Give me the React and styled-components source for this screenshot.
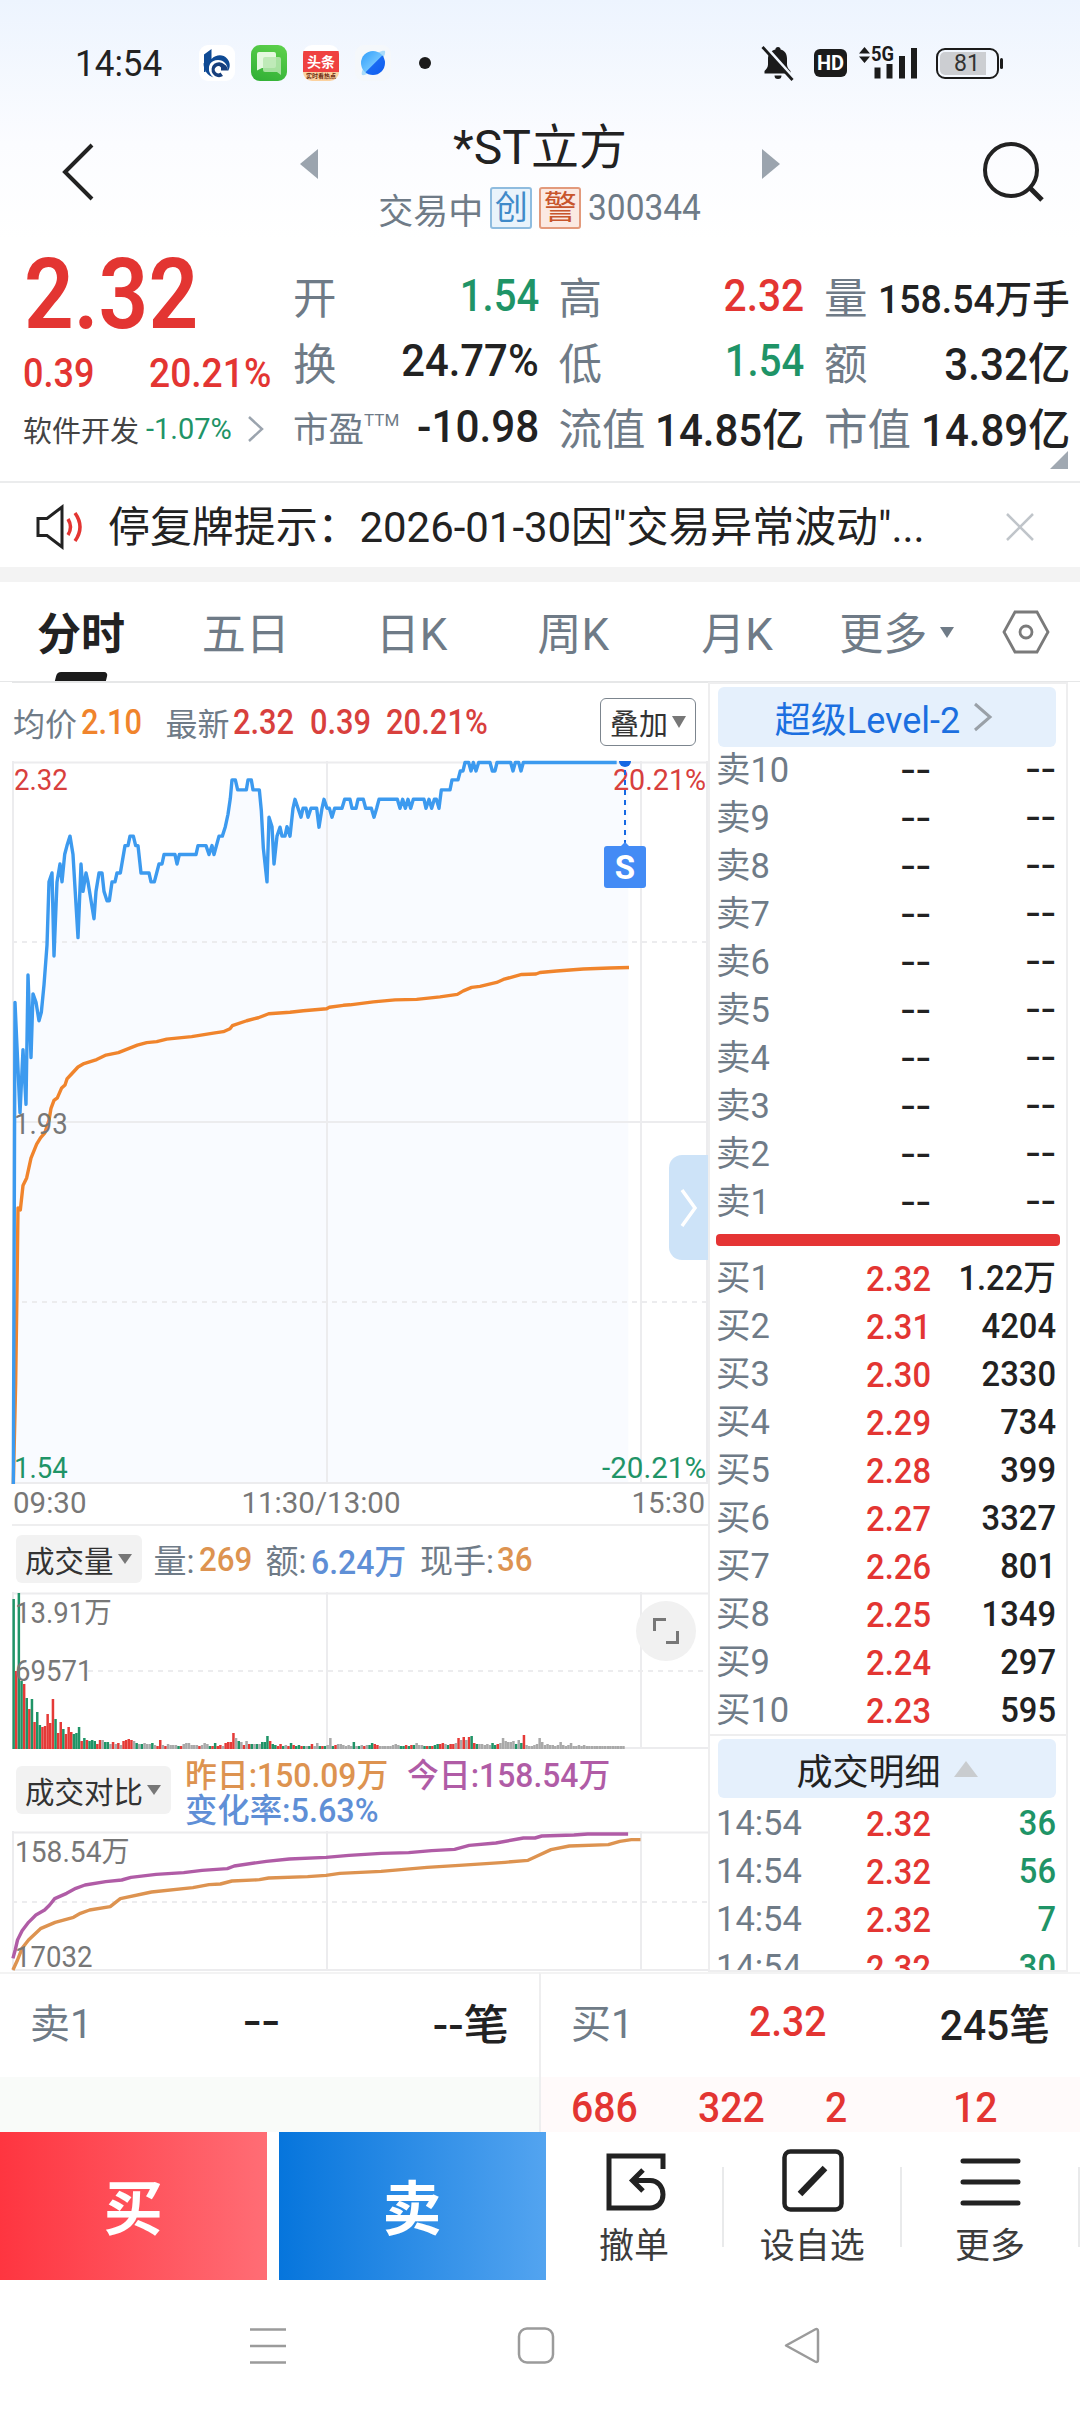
import React from "react";
import styled, { createGlobalStyle } from "styled-components";

const C = {
  ink: "#222222",
  label: "#6f7b87",
  red: "#e33532",
  green: "#1f9467",
  blue: "#3c9aef",
  orange: "#f0842c",
  axis: "#777777",
  line: "#eeeeef",
  sand: "#dd9350",
  steel: "#5f8fd6",
  purple: "#b05ca6",
};

const Global = createGlobalStyle`
  html, body { margin: 0; padding: 0; background: #fff; }
  body { font-family: Roboto, "Noto Sans CJK SC", sans-serif; color: ${C.ink}; }
  *, *::before, *::after { box-sizing: border-box; }
  svg { display: block; flex: none; overflow: visible; }
`;

const Screen = styled.div`
  width: 1080px;
  height: 2412px;
  overflow: hidden;
  display: flex;
  flex-direction: column;
  background: #fff;
`;

/* $sx condenses the glyphs; $from is the edge that stays in place */
const Text = styled.span`
  display: inline-block;
  font-size: ${(p) => p.$size || 34}px;
  font-weight: ${(p) => p.$weight || 400};
  color: ${(p) => p.$color || C.ink};
  margin-left: ${(p) => p.$ml || 0}px;
  margin-right: ${(p) => p.$mr || 0}px;
  margin-bottom: ${(p) => p.$up || 0}px;
  white-space: nowrap;
  transform: scaleX(${(p) => p.$sx || 1});
  transform-origin: ${(p) => p.$from || "left"} center;
`;

/* ---------- top ---------- */
const Top = styled.header`
  height: 240px;
  flex: none;
  background: linear-gradient(#edf4fe, #fbfcff 60%, #fff);
`;
const StatusBar = styled.div`
  height: 104px;
  padding: 22px 81px 0 75px;
  display: flex;
  align-items: center;
`;
const AppIcons = styled.div`
  display: flex;
  align-items: center;
  gap: 16px;
  margin-left: 34px;
`;
const AppIcon = styled.div`
  width: 36px;
  height: 36px;
  border-radius: 9px;
  overflow: hidden;
  background: ${(p) => p.$bg || "#fff"};
`;
const NewsIcon = styled(AppIcon)`
  display: flex;
  flex-direction: column;
  justify-content: flex-end;
  text-align: center;
  white-space: nowrap;
  background: linear-gradient(#fff 18%, #ef4140 18%, #ef4140 74%, #fbd2a0 74%);
  color: #fff;
  font-size: 14px;
  font-weight: 700;
  line-height: 18px;
  small {
    color: #6b2b10;
    font-size: 6px;
    line-height: 10px;
  }
`;
const Dot = styled.i`
  width: 12px;
  height: 12px;
  margin-left: 28px;
  border-radius: 50%;
  background: #1b1b1b;
`;
const StatusRight = styled.div`
  margin-left: auto;
  display: flex;
  align-items: center;
`;
const HdBadge = styled.div`
  width: 33px;
  height: 28px;
  margin: 0 10px 0 19px;
  border-radius: 6px;
  background: #1b1b1b;
  color: #fff;
  font-size: 20px;
  font-weight: 700;
  line-height: 29px;
  text-align: center;
`;
const Battery = styled.div`
  width: 63px;
  height: 31px;
  margin-left: 17px;
  padding: 2px;
  border: 2px solid #1b1b1b;
  border-radius: 9px;
  position: relative;
  div {
    width: 46px;
    height: 23px;
    border-radius: 5px 0 0 5px;
    background: #ccced2;
    padding-left: 14px;
    font-size: 23px;
    line-height: 24px;
    color: #333;
  }
  &::after {
    content: "";
    position: absolute;
    right: -6px;
    top: 8px;
    width: 3px;
    height: 11px;
    border-radius: 2px;
    background: #1b1b1b;
  }
`;
const TitleBar = styled.div`
  height: 136px;
  display: grid;
  grid-template-columns: 300px 480px 300px;
`;
const Side = styled.div`
  display: flex;
  justify-content: ${(p) => p.$end || "flex-start"};
  padding: ${(p) => p.$pad};
`;
const TitleGroup = styled.div`
  display: flex;
  justify-content: space-between;
  & > svg {
    margin-top: 45px;
  }
`;
const TitleBlock = styled.div`
  display: flex;
  flex-direction: column;
  align-items: center;
  padding-top: 10px;
`;
const Name = styled.h1`
  margin: 0;
  font-size: 48px;
  font-weight: 400;
  line-height: 68px;
`;
const SubLine = styled.div`
  display: flex;
  align-items: center;
  height: 52px;
`;
const Tag = styled.span`
  width: 42px;
  height: 42px;
  margin-left: 7px;
  border: 2px solid ${(p) => p.$edge};
  border-radius: 3px;
  background: ${(p) => p.$bg};
  color: ${(p) => p.$fg};
  font-size: 33px;
  line-height: 37px;
  text-align: center;
`;

/* ---------- quote ---------- */
const Quote = styled.section`
  height: 243px;
  flex: none;
  position: relative;
  display: grid;
  grid-template-columns: 293px 777px;
  border-bottom: 2px solid #ebeced;
`;
const PriceCol = styled.div`
  padding: 9px 0 0 23px;
  display: flex;
  flex-direction: column;
`;
const PriceRow = styled.div`
  height: ${(p) => p.$h}px;
  display: flex;
  align-items: center;
  & > svg {
    margin-left: 15px;
  }
`;
const Stats = styled.div`
  display: grid;
  grid-template-columns: repeat(3, 246px);
  grid-auto-rows: 65.6px;
  column-gap: 19.5px;
  padding-top: 23px;
`;
const Stat = styled.div`
  display: flex;
  align-items: center;
  justify-content: space-between;
`;
const Sup = styled.sup`
  font-size: 17px;
  line-height: 0;
  vertical-align: 16px;
`;
const Corner = styled.i`
  position: absolute;
  right: 12px;
  bottom: 12px;
  border-left: 18px solid transparent;
  border-bottom: 18px solid #a0a8b1;
`;

/* ---------- notice + tabs ---------- */
const Notice = styled.section`
  height: 84px;
  flex: none;
  display: flex;
  align-items: center;
  padding: 4px 46px 0 36px;
  & > :last-child {
    margin-left: auto;
  }
`;
const Band = styled.div`
  height: 15px;
  flex: none;
  background: #f3f3f3;
`;
const Tabs = styled.nav`
  height: 100px;
  flex: none;
  display: flex;
  align-items: center;
  padding: 0 30px 0 37px;
  border-bottom: 1px solid #e6e7e8;
`;
const Tab = styled.div`
  width: ${(p) => p.$w}px;
  height: 99px;
  padding-top: 6px;
  display: flex;
  align-items: center;
  font-size: 44px;
  line-height: 60px;
  font-weight: ${(p) => (p.$on ? 700 : 400)};
  color: ${(p) => (p.$on ? C.ink : C.label)};
  position: relative;
  ${(p) =>
    p.$on &&
    `&::after {
      content: "";
      position: absolute;
      left: 19px;
      bottom: 0;
      width: 51px;
      height: 9px;
      border-radius: 4px 4px 0 0;
      transform: skewX(-14deg);
      background: #1b1b1b;
    }`}
`;
const Caret = styled.i`
  display: inline-block;
  border: ${(p) => p.$s || 7.5}px solid transparent;
  border-top: ${(p) => p.$h || 11}px solid ${(p) => p.$c || "#6f7b87"};
  border-bottom: 0;
  margin-left: ${(p) => p.$ml || 0}px;
  margin-bottom: ${(p) => p.$up || 0}px;
`;

/* ---------- body ---------- */
const Body = styled.main`
  height: 1290px;
  flex: none;
  display: flex;
  padding-left: 12px;
`;
const ChartCol = styled.div`
  width: 696px;
  display: flex;
  flex-direction: column;
`;
const Legend = styled.div`
  height: 79px;
  padding: 0 12px 0 1px;
  border-top: 1px solid #e6e7e8;
  display: flex;
  align-items: center;
`;
const OverlayButton = styled.div`
  width: 96px;
  height: 48px;
  margin-left: auto;
  display: flex;
  align-items: center;
  justify-content: center;
  gap: 4px;
  border: 1.5px solid #7c858e;
  border-radius: 6px;
  font-size: 29px;
  color: #333;
`;
const Plot = styled.div`
  height: ${(p) => p.$h}px;
  position: relative;
`;
const AxisText = styled.span`
  position: absolute;
  ${(p) => (p.$right !== undefined ? `right: ${p.$right}px;` : `left: ${p.$left || 2}px;`)}
  top: ${(p) => p.$y - 20}px;
  font-size: 29px;
  line-height: 40px;
  color: ${(p) => p.$color || C.axis};
  transform: scaleX(${(p) => p.$sx || 0.95});
  transform-origin: ${(p) => (p.$right !== undefined ? "right" : "left")} center;
`;
const Marker = styled.div`
  position: absolute;
  left: 592px;
  top: 85px;
  width: 42px;
  height: 42px;
  border-radius: 3px;
  background: #438bf5;
  color: #fff;
  font-size: 33px;
  font-weight: 700;
  line-height: 43px;
  text-align: center;
`;
const MarkerLine = styled.svg`
  position: absolute;
  left: 607px;
  top: 0;
`;
const Drawer = styled.div`
  position: absolute;
  right: 0;
  top: 394px;
  width: 39px;
  height: 105px;
  border-radius: 13px 0 0 13px;
  background: #cde3f8;
  display: flex;
  align-items: center;
  padding-left: 10px;
`;
const TimeAxis = styled.div`
  height: 42px;
  display: grid;
  grid-template-columns: 1fr auto 1fr;
  align-items: center;
  padding: 0 3px 3px 1px;
  border-bottom: 2px solid ${C.line};
  color: ${C.axis};
  font-size: 29.5px;
  span:nth-child(2) { margin-right: 76px; }
  span:last-child { text-align: right; }
`;
const IndicatorHead = styled.div`
  height: ${(p) => p.$h}px;
  display: flex;
  align-items: center;
  padding-left: 4px;
`;
const Picker = styled.div`
  height: 48px;
  padding: 0 10px 0 9px;
  display: flex;
  align-items: center;
  gap: 4px;
  flex: none;
  border-radius: 6px;
  background: #f2f2f2;
  color: #333;
  font-size: 29.5px;
`;
const Compare = styled.div`
  margin: 1px 0 0 14px;
`;
const CompareRow = styled.div`
  height: 35px;
  display: flex;
  align-items: center;
`;
const Expand = styled.div`
  position: absolute;
  left: 624px;
  top: 9px;
  width: 60px;
  height: 60px;
  border-radius: 50%;
  background: #f1f1f1;
  display: flex;
  align-items: center;
  justify-content: center;
`;

const Book = styled.aside`
  width: 360px;
  border: 2.5px solid #eeeeef;
  border-bottom-width: 2px;
  display: flex;
  flex-direction: column;
  overflow: hidden;
`;
const BookButton = styled.div`
  width: 338px;
  height: ${(p) => p.$h}px;
  margin: ${(p) => p.$m};
  padding-right: ${(p) => p.$pr || 0}px;
  flex: none;
  display: flex;
  align-items: center;
  justify-content: center;
  gap: 13px;
  border-radius: 6px;
  background: #e5f0fc;
  color: ${(p) => p.$c};
  font-size: 36px;
`;
const Level = styled.div`
  height: 48px;
  flex: none;
  display: grid;
  grid-template-columns: 84px 131px 125px;
  align-items: center;
  padding-left: 6px;
  font-size: 35px;
  line-height: 48px;
  span {
    text-align: right;
    white-space: nowrap;
    transform: scaleX(${(p) => (p.$empty ? 1.28 : 0.935)});
    transform-origin: right center;
  }
  span:first-child {
    text-align: left;
    color: ${C.label};
    transform: scaleX(0.985);
    transform-origin: left center;
  }
  span:nth-child(2) { color: ${(p) => (p.$empty ? C.ink : C.red)}; font-weight: 500; padding-top: ${(p) => (p.$empty ? 0 : 2)}px; }
  span:last-child { color: ${(p) => p.$qty || C.ink}; font-weight: 500; margin-top: ${(p) => (p.$empty ? -3 : 0)}px; }
`;
const RedBar = styled.div`
  width: 344px;
  height: 12px;
  margin: 7px 0 8px 6px;
  flex: none;
  border-radius: 4px;
  background: #e53434;
`;
const Rule = styled.div`
  height: 2px;
  flex: none;
  background: #eeeeef;
`;

/* ---------- queue ---------- */
const Queue = styled.section`
  height: 160px;
  flex: none;
  display: grid;
  grid-template-columns: 539px 541px;
`;
const QueueSide = styled.div`
  border-top: 2px solid #f3f3f3;
  border-left: ${(p) => (p.$buy ? "2px solid #eeeeef" : "0")};
  display: flex;
  flex-direction: column;
`;
const QueueHead = styled.div`
  height: 103px;
  display: grid;
  grid-template-columns: ${(p) => p.$cols};
  align-items: center;
  padding: 0 0 9px 30px;
  span:last-child { text-align: right; }
`;
const QueueRow = styled.div`
  height: 55px;
  padding: 5px 0 0 30px;
  background: ${(p) => p.$bg};
  display: grid;
  grid-template-columns: 127px 127px 128px 1fr;
  align-items: center;
`;

/* ---------- actions ---------- */
const Actions = styled.footer`
  height: 148px;
  flex: none;
  display: flex;
`;
const Trade = styled.button`
  width: 267px;
  margin: 0 12px 0 0;
  padding: 0 0 4px;
  border: 0;
  background: linear-gradient(90deg, ${(p) => p.$from}, ${(p) => p.$to});
  color: #fff;
  font: 700 59px Roboto, "Noto Sans CJK SC", sans-serif;
  &:nth-child(2) { margin-right: 0; }
`;
const Action = styled.div`
  width: ${(p) => p.$w}px;
  display: flex;
  flex-direction: column;
  align-items: center;
  padding-top: 14px;
  font-size: 35px;
  line-height: 50px;
  color: #3c3c3c;
  svg { margin-bottom: 12px; }
`;
const Split = styled.i`
  width: 2px;
  height: 80px;
  margin-top: 35px;
  background: #e9eaeb;
`;
const NavBar = styled.div`
  flex: 1;
  display: flex;
  align-items: flex-start;
  padding: 47px 0 0 249px;
`;

/* ---------- data ---------- */
const PRICE =
  "40,1493 45,525 50,600 60,747 69,620 78,730 84,470 93,636 99,508 108,525 117,562 124,545 132,490 141,410 147,283 156,265 162,432 171,283 180,247 186,283 194,228 201,210 210,191 219,228 234,395 243,247 249,302 258,265 264,283 282,357 288,302 297,265 306,265 312,302 321,321 328,321 336,283 345,283 351,265 361,265 375,210 384,210 390,191 400,191 407,210 414,210 423,265 447,265 453,283 463,283 477,247 486,247 492,228 525,228 531,247 538,228 588,228 594,210 618,210 627,228 636,210 642,228 657,191 667,191 676,172 684,147 691,115 696,78 706,78 713,98 739,98 744,78 754,78 759,98 778,98 784,140 790,215 801,283 807,153 816,172 822,247 831,191 840,173 846,191 855,191 861,172 870,191 879,135 885,117 903,153 909,135 918,135 924,153 933,135 950,135 957,173 966,135 972,117 981,135 988,135 996,153 1004,135 1026,135 1034,117 1050,117 1056,135 1068,135 1074,117 1090,117 1097,135 1114,135 1122,153 1130,135 1137,117 1192,117 1200,135 1208,117 1216,135 1224,117 1232,135 1240,117 1272,117 1278,135 1287,117 1295,135 1303,117 1309,117 1317,135 1324,98 1350,98 1356,78 1374,78 1381,60 1389,60 1395,43 1406,43 1413,60 1420,43 1428,60 1436,43 1470,43 1477,60 1485,60 1491,43 1532,43 1539,60 1546,43 1556,43 1563,60 1570,43 1850,43";
const AVERAGE =
  "40,1493 47,1290 51,1100 54,938 61,942 69,893 80,878 93,838 110,810 122,797 134,788 147,762 153,738 162,722 172,717 185,697 195,691 201,679 216,668 234,655 252,648 290,640 318,631 355,626 412,611 440,606 470,604 500,599 575,594 640,587 670,584 690,578 697,572 740,562 775,556 806,548 870,545 910,542 980,538 988,535 1030,531 1050,530 1085,527 1120,524 1185,520 1250,519 1320,514 1372,509 1390,502 1415,495 1440,493 1490,485 1510,479 1565,469 1608,468 1620,465 1670,462 1750,458 1830,456 1887,455";
const TODAY =
  "28,655 33,630 38,600 48,572 62,547 78,525 97,510 108,495 119,476 145,460 165,445 185,435 230,425 265,420 285,412 340,403 400,398 440,391 495,386 510,378 580,364 630,357 710,352 760,346 830,340 890,338 940,332 990,328 1022,316 1080,309 1140,294 1165,294 1180,288 1250,285 1280,282 1368,282";
const YESTERDAY =
  "28,690 38,660 48,625 62,600 88,566 120,547 160,532 175,520 195,510 240,500 262,476 330,456 420,443 455,434 480,432 505,423 565,419 585,414 670,410 710,406 740,400 830,394 930,382 1000,376 1100,367 1150,361 1170,348 1200,329 1240,318 1325,314 1350,304 1375,299 1395,299";
/* one entry a minute: r = up, g = down, a = flat, then the bar height */
const VOLUME = (
  "g150 r78 g156 g68 r65 g51 r40 g50 r27 g37 g24 r22 r23 r35 r26 r50 g30 r16 r27 g20 r15 r22 r17 g15 g16 g22 r8 g11 r9 g8 g9 g8 r5 r9 a9 g7 g7 a5 r7 a5 r6 a4 r8 r9 r10 r9 a8 g6 a5 g5 a6 a5 a5 g6 a4 r3 r9 a4 r3 a5 a4 a4 a4 g3 r3 a5 a6 a6 a4 a4 a4 r3 a4 a6 a5 g3 r3 g6 r3 r4 a3 r6 r7 r7 r16 a11 g8 a7 r4 a8 r5 g5 a5 g5 a5 g7 g7 g13 r8 g5 g4 r3 r5 g3 a4 r3 g6 r4 g3 g4 r3 g3 a3 g3 r5 a3 a6 g3 r3 g3 a4 a11 " +
  "g3 r4 a5 a5 a4 a3 a4 a3 g7 a3 g3 a4 r3 a4 g4 g6 r5 r4 a3 a3 a3 a3 a3 a4 a5 a4 g3 g3 r4 g3 r4 g4 a6 a4 a4 g3 r3 g3 r3 g4 g5 r5 r6 a5 g4 r5 r5 a6 r11 a9 r12 a9 r12 g13 r6 g5 a5 a5 a4 a5 a4 g6 g4 r5 a6 a11 a8 a7 a7 a8 g5 a9 g6 r14 a4 a3 a3 a4 a5 a11 a7 a4 a5 a4 a4 a3 a4 a7 a4 a3 a4 a6 a3 a3 a4 a3 a4 a3 a3 a3 a3 a3 a3 a3 a3 a3 a3 a3 a3 a3 a3 a3"
).split(" ");
const BAR_COLOR = { r: "#e53a37", g: "#1f9467", a: "#a9a9a9" };

const BUYS = [
  ["2.32", "1.22万"],
  ["2.31", "4204"],
  ["2.30", "2330"],
  ["2.29", "734"],
  ["2.28", "399"],
  ["2.27", "3327"],
  ["2.26", "801"],
  ["2.25", "1349"],
  ["2.24", "297"],
  ["2.23", "595"],
];
const STATS = [
  { k: "开", v: "1.54", color: C.green, sx: 0.91 },
  { k: "高", v: "2.32", color: C.red, sx: 0.925 },
  { k: "量", v: "158.54万手", size: 39, sx: 0.96 },
  { k: "换", v: "24.77%", sx: 0.95 },
  { k: "低", v: "1.54", color: C.green, sx: 0.91 },
  { k: "额", v: "3.32亿", sx: 0.96 },
  { k: "市盈", v: "-10.98", sx: 0.96 },
  { k: "流值", v: "14.85亿", sx: 0.955 },
  { k: "市值", v: "14.89亿", sx: 0.955 },
];

function Grid({ h, mid, quarters, dashFrom = 0 }) {
  return (
    <g fill="none" stroke="#ececee" strokeWidth="2">
      <path d={`M0 1.5H696M0 ${h - 1}H696M1 0V${h}M315 0V${h}M629 0V${h}`} />
      {quarters && <path d={`M0 ${mid}H696M695 0V${h}`} />}
      {(quarters || [mid]).map((y) => (
        <path key={y} d={`M${dashFrom} ${y}H696`} strokeDasharray="5 5" />
      ))}
    </g>
  );
}

function Lines({ h, viewBox, children }) {
  return (
    <svg x="0" y="0" width="696" height={h} viewBox={viewBox} preserveAspectRatio="none">
      {children}
    </svg>
  );
}

function Trend({ points, color }) {
  return (
    <polyline
      points={points}
      fill="none"
      stroke={color}
      strokeWidth="3.400"
      vectorEffect="non-scaling-stroke"
      strokeLinejoin="round"
    />
  );
}

function StatusIcons() {
  return (
    <StatusRight>
      <svg width="34" height="36" viewBox="0 0 34 36">
        <path d="M17 2c1.6 0 2.6 1 2.6 2.4C24 5.600 26 9 26 13.500v6c0 2.500 1.500 4.500 3.500 6.500v2.500h-26V26c2-2 3.500-4 3.500-6.500v-6C7 9 10 5.600 14.400 4.400 14.400 3 15.400 2 17 2zM13.500 30.500h7a3.500 3.500 0 0 1-7 0z" fill="#1b1b1b" />
        <path d="M4 1.500 33 34" stroke="#f3f8ff" strokeWidth="4" />
        <path d="M1.500 2 31.500 35" stroke="#1b1b1b" strokeWidth="2.800" />
      </svg>
      <HdBadge>HD</HdBadge>
      <svg width="62" height="34" viewBox="0 0 62 34">
        <path d="M2 7.500 7.500 1 13 7.500zM2 10.500 7.500 17 13 10.500z" fill="#1b1b1b" />
        <text x="14" y="15" fontSize="19.500" fontWeight="700" fill="#1b1b1b" textLength="23" lengthAdjust="spacingAndGlyphs">5G</text>
        <path d="M20.500 21.500v11M32.500 18v14.500M45 10v22.500M57 2v30.500" stroke="#1b1b1b" strokeWidth="6" />
      </svg>
      <Battery>
        <div>81</div>
      </Battery>
    </StatusRight>
  );
}

function Header() {
  return (
    <Top>
      <StatusBar>
        <Text $size={36.5} $sx={0.96} $mr={-1}>14:54</Text>
        <AppIcons>
          <AppIcon>
            <svg width="36" height="36" viewBox="0 0 36 36">
              <path d="M5 9.500 12.500 4V14C17 9.500 24 9 28 13.500 31.500 17.500 31.500 22 29 26 28.500 19 25 15 19 15 12 15 9 20 10 26L6.500 22.500V27H5z" fill="#0f4a94" />
              <path d="M25.500 19.500A7.500 7.500 0 1 0 24 31l-2.500-3.500a3.500 3.500 0 1 1 .5-5v3h7c0-2.500-1.500-5-3.500-6z" fill="#173f7c" />
              <path d="M4.500 18c0 7 4 12.500 10 14.500-4-3.500-5-7-4.500-10.500z" fill="#0f4a94" />
            </svg>
          </AppIcon>
          <AppIcon $bg="linear-gradient(200deg, #5fd24c, #2fae35)">
            <svg width="36" height="36" viewBox="0 0 36 36">
              <path d="M8 7h15q2 0 2 2v12q0 2-2 2H11l-5 2.500V9q0-2 2-2z" fill="#e4f8df" />
              <path d="M14 12h14q2 0 2 2v16l-4-3H14q-2 0-2-2V14q0-2 2-2z" fill="#b9e8b2" opacity=".85" />
            </svg>
          </AppIcon>
          <NewsIcon>
            头条
            <small>实时看热点</small>
          </NewsIcon>
          <AppIcon $bg="#f5f8fb">
            <svg width="36" height="36" viewBox="0 0 36 36">
              <defs>
                <linearGradient id="planet" x1="0" y1="0" x2="1" y2="1">
                  <stop offset="0" stopColor="#2f9dfb" />
                  <stop offset=".52" stopColor="#6cc2ff" />
                  <stop offset=".55" stopColor="#1a6af2" />
                  <stop offset="1" stopColor="#0f5df0" />
                </linearGradient>
              </defs>
              <path d="M30 6c-2-1-8 1-13 6S5 26 7 30c3 1 9-3 14-8s10-12 9-16z" fill="#a9dcfb" />
              <circle cx="18" cy="18" r="12" fill="url(#planet)" />
            </svg>
          </AppIcon>
        </AppIcons>
        <Dot />
        <StatusIcons />
      </StatusBar>
      <TitleBar>
        <Side $pad="38px 0 0 60px">
          <svg width="36" height="60" viewBox="0 0 36 60">
            <path d="M32 3 5 30l27 27" fill="none" stroke={C.ink} strokeWidth="4" />
          </svg>
        </Side>
        <TitleGroup>
          <svg width="18" height="30"><path d="M18 0v30L0 15z" fill="#9ba4ae" /></svg>
          <TitleBlock>
            <Name>*ST立方</Name>
            <SubLine>
              <Text $size={35} $color={C.label}>交易中</Text>
              <Tag $edge="#8fbcdf" $bg="#e9f3fb" $fg="#3f8ac9">创</Tag>
              <Tag $edge="#e39a7c" $bg="#fbe9e2" $fg="#c8552c">警</Tag>
              <Text $size={36} $color={C.label} $ml={7} $mr={-8} $sx={0.93}>300344</Text>
            </SubLine>
          </TitleBlock>
          <svg width="18" height="30"><path d="M0 0v30l18-15z" fill="#9ba4ae" /></svg>
        </TitleGroup>
        <Side $end="flex-end" $pad="37px 34px 0 0">
          <svg width="64" height="62" viewBox="0 0 64 62">
            <circle cx="29" cy="29" r="26" fill="none" stroke={C.ink} strokeWidth="4" />
            <path d="M48 47 60 59" stroke={C.ink} strokeWidth="5" />
          </svg>
        </Side>
      </TitleBar>
    </Top>
  );
}

function QuotePanel() {
  return (
    <Quote>
      <PriceCol>
        <PriceRow $h={90}>
          <Text $size={98} $weight={600} $color={C.red} $sx={0.89} $ml={1}>2.32</Text>
        </PriceRow>
        <PriceRow $h={68}>
          <Text $size={40} $weight={500} $color={C.red} $sx={0.9}>0.39</Text>
          <Text $size={40} $weight={500} $color={C.red} $ml={47} $sx={0.93}>20.21%</Text>
        </PriceRow>
        <PriceRow $h={44}>
          <Text $size={29} $color="#444">软件开发</Text>
          <Text $size={29} $color={C.green} $ml={7}>-1.07%</Text>
          <svg width="18" height="26"><path d="M2 1 15 13 2 25" fill="none" stroke="#9ba4ae" strokeWidth="2.500" /></svg>
        </PriceRow>
      </PriceCol>
      <Stats>
        {STATS.map(({ k, v, color, size, sx }) => (
          <Stat key={k}>
            <Text $size={k === "市盈" ? 35.5 : 43.5} $color={C.label}>
              {k}
              {k === "市盈" && <Sup>TTM</Sup>}
            </Text>
            <Text $size={size || 44} $weight={500} $color={color} $sx={sx} $from="right">{v}</Text>
          </Stat>
        ))}
      </Stats>
      <Corner />
    </Quote>
  );
}

function PriceChart() {
  return (
    <Plot $h={723}>
      <svg width="696" height="723">
        <Lines h={723} viewBox="36 42 2088 1453">
          <polygon points={`${PRICE} 1885,43 1885,1493`} fill="#f9fbff" />
        </Lines>
        <Grid h={723} mid={361} quarters={[181, 541]} />
        <Lines h={723} viewBox="36 40 2088 1453">
          <Trend points={AVERAGE} color={C.orange} />
          <Trend points={PRICE} color={C.blue} />
        </Lines>
      </svg>
      <AxisText $y={19} $color="#d8403d">2.32</AxisText>
      <AxisText $y={19} $right={2} $sx={0.99} $color="#d8403d">20.21%</AxisText>
      <AxisText $y={363}>1.93</AxisText>
      <AxisText $y={707} $color={C.green}>1.54</AxisText>
      <AxisText $y={707} $right={2} $sx={1.02} $color={C.green}>-20.21%</AxisText>
      <MarkerLine width="12" height="88">
        <path d="M0 0h12a6 6 0 0 1-12 0z" fill="#1668e3" />
        <path d="M6 9V82" stroke="#1668e3" strokeWidth="2" strokeDasharray="5 5" />
        <path d="M1 86 6 81l5 5z" fill="#438bf5" />
      </MarkerLine>
      <Marker>S</Marker>
      <Drawer>
        <svg width="20" height="38"><path d="M3 1 16 19 3 37" fill="none" stroke="#fff" strokeWidth="3.500" /></svg>
      </Drawer>
    </Plot>
  );
}

function VolumeChart() {
  return (
    <Plot $h={157}>
      <svg width="696" height="157">
        <Grid h={157} mid={79} dashFrom={76} />
        {VOLUME.map((v, i) => {
          const h = Number(v.slice(1));
          return <rect key={i} x={(0.4 + i * 2.617).toFixed(1)} y={157 - h} width="2.500" height={h} fill={BAR_COLOR[v[0]]} />;
        })}
      </svg>
      <AxisText $y={21} $left={3}>13.91万</AxisText>
      <AxisText $y={79} $left={3}>69571</AxisText>
      <Expand>
        <svg width="26" height="26"><path d="M1.500 13V1.500H13M13 24.500h11.500V13" fill="none" stroke="#777" strokeWidth="3" /></svg>
      </Expand>
    </Plot>
  );
}

function CompareChart() {
  return (
    <Plot $h={140}>
      <svg width="696" height="140">
        <Grid h={140} mid={71} />
        <Lines h={140} viewBox="26 273 1516 420">
          <Trend points={YESTERDAY} color={C.sand} />
          <Trend points={TODAY} color={C.purple} />
        </Lines>
      </svg>
      <AxisText $y={21} $left={3} $sx={0.97}>158.54万</AxisText>
      <AxisText $y={126} $left={3}>17032</AxisText>
    </Plot>
  );
}

function OrderBook() {
  return (
    <Book>
      <BookButton $h={60} $m="3px 0 0 8px" $pr={6} $c="#1b6fe0">
        超级Level-2
        <svg width="20" height="30"><path d="M2 2 17 15 2 28" fill="none" stroke="#9aa1a8" strokeWidth="3" /></svg>
      </BookButton>
      {[10, 9, 8, 7, 6, 5, 4, 3, 2, 1].map((n) => (
        <Level key={n} $empty>
          <span>卖{n}</span>
          <span>--</span>
          <span>--</span>
        </Level>
      ))}
      <RedBar />
      {BUYS.map(([price, qty], i) => (
        <Level key={price}>
          <span>买{i + 1}</span>
          <span>{price}</span>
          <span>{qty}</span>
        </Level>
      ))}
      <Rule />
      <BookButton $h={59} $m="3px 0 1px 8px" $c={C.ink}>
        成交明细
        <svg width="24" height="16"><path d="M12 0 24 16H0z" fill="#c9cccf" /></svg>
      </BookButton>
      {["36", "56", "7", "30"].map((q) => (
        <Level key={q} $qty={C.green}>
          <span>14:54</span>
          <span>2.32</span>
          <span>{q}</span>
        </Level>
      ))}
    </Book>
  );
}

export default function App() {
  return (
    <>
      <Global />
      <Screen>
        <Header />
        <QuotePanel />
        <Notice>
          <svg width="50" height="46" viewBox="0 0 50 46">
            <path d="M2 14.500H11L26 3V43L11 31.500H2z" fill="none" stroke={C.ink} strokeWidth="3" />
            <path d="M32 15q5 8 0 16M39 9q10 14 0 28" fill="none" stroke={C.red} strokeWidth="3.500" />
          </svg>
          <Text $size={42} $ml={22} $up={7} $sx={0.998}>停复牌提示：2026-01-30因"交易异常波动"...</Text>
          <svg width="28" height="28"><path d="M1 1 27 27M27 1 1 27" stroke="#c0c5ca" strokeWidth="2.500" /></svg>
        </Notice>
        <Band />
        <Tabs>
          <Tab $on $w={165}>分时</Tab>
          <Tab $w={174}>五日</Tab>
          <Tab $w={162}>日K</Tab>
          <Tab $w={164}>周K</Tab>
          <Tab $w={138}>月K</Tab>
          <Tab $w={163}>更多<Caret $ml={13} $up={4} /></Tab>
          <svg width="48" height="44" viewBox="0 0 48 44">
            <path d="M13 2H35L46 22 35 42H13L2 22z" fill="none" stroke="#7a7a7a" strokeWidth="2.800" />
            <circle cx="24" cy="22" r="6" fill="none" stroke="#7a7a7a" strokeWidth="2.800" />
          </svg>
        </Tabs>
        <Body>
          <ChartCol>
            <Legend>
              <Text $size={32} $color={C.label}>均价</Text>
              <Text $size={35} $weight={500} $color={C.orange} $ml={4} $sx={0.88}>2.10</Text>
              <Text $size={32} $color={C.label} $ml={15}>最新</Text>
              <Text $size={35} $weight={500} $color="#d8403d" $ml={4} $sx={0.88}>2.32</Text>
              <Text $size={35} $weight={500} $color="#d8403d" $ml={7} $sx={0.88}>0.39</Text>
              <Text $size={35} $weight={500} $color="#d8403d" $ml={7} $sx={0.885}>20.21%</Text>
              <OverlayButton>叠加<Caret $s={7} $h={12} $c="#777" /></OverlayButton>
            </Legend>
            <PriceChart />
            <TimeAxis>
              <span>09:30</span>
              <span>11:30/13:00</span>
              <span>15:30</span>
            </TimeAxis>
            <IndicatorHead $h={66}>
              <Picker>成交量<Caret $s={7} $h={10} $c="#777" /></Picker>
              <Text $size={33} $color={C.label} $ml={12}>量:</Text>
              <Text $size={34} $weight={500} $color={C.sand} $ml={4} $sx={0.92}>269</Text>
              <Text $size={33} $color={C.label} $ml={9}>额:</Text>
              <Text $size={34} $weight={500} $color={C.steel} $ml={4} $sx={0.94}>6.24万</Text>
              <Text $size={33} $color={C.label} $ml={8}>现手:</Text>
              <Text $size={34} $weight={500} $color={C.sand} $ml={3} $sx={0.92}>36</Text>
            </IndicatorHead>
            <VolumeChart />
            <IndicatorHead $h={82}>
              <Picker>成交对比<Caret $s={7} $h={10} $c="#777" /></Picker>
              <Compare>
                <CompareRow>
                  <Text $size={33} $weight={500} $color={C.sand} $sx={0.965}>昨日:150.09万</Text>
                  <Text $size={33} $weight={500} $color={C.purple} $ml={11} $sx={0.965}>今日:158.54万</Text>
                </CompareRow>
                <CompareRow>
                  <Text $size={33} $weight={500} $color={C.steel} $sx={0.98}>变化率:5.63%</Text>
                </CompareRow>
              </Compare>
            </IndicatorHead>
            <CompareChart />
          </ChartCol>
          <OrderBook />
        </Body>
        <Queue>
          <QueueSide>
            <QueueHead $cols="218px 60px 201px">
              <Text $size={40} $color={C.label}>卖1</Text>
              <Text $size={42} $weight={500} $sx={1.3} $ml={-5}>--</Text>
              <Text $size={42} $weight={500} $sx={1.08} $from="right">--笔</Text>
            </QueueHead>
            <QueueRow $bg="#f9fbf9" />
          </QueueSide>
          <QueueSide $buy>
            <QueueHead $cols="178px 120px 181px">
              <Text $size={40} $color={C.label}>买1</Text>
              <Text $size={43} $weight={500} $color={C.red} $sx={0.91}>2.32</Text>
              <Text $size={42} $weight={500} $sx={0.97} $from="right">245笔</Text>
            </QueueHead>
            <QueueRow $bg="#fffafa">
              {["686", "322", "2", "12"].map((n) => (
                <Text key={n} $size={43} $weight={500} $color={C.red} $sx={0.91}>{n}</Text>
              ))}
            </QueueRow>
          </QueueSide>
        </Queue>
        <Actions>
          <Trade $from="#fe3540" $to="#ff6d75">买</Trade>
          <Trade $from="#0675dc" $to="#53a4f0">卖</Trade>
          <Action $w={177}>
            <svg width="60" height="64" viewBox="0 0 60 64">
              <path d="M57 24V11H3v52h41c8 0 13-6 13-13.500S52 35.500 44 35.500H27M37 25 26.500 35.500 37 46" fill="none" stroke="#222" strokeWidth="5" transform="translate(2 -1)" />
            </svg>
            撤单
          </Action>
          <Split />
          <Action $w={176}>
            <svg width="62" height="64" viewBox="0 0 62 64">
              <rect x="2.500" y="5.500" width="57" height="58" rx="6" fill="none" stroke="#222" strokeWidth="4.500" transform="translate(1 0)" />
              <path d="M19 48 44 22" stroke="#222" strokeWidth="6.500" />
            </svg>
            设自选
          </Action>
          <Split />
          <Action $w={176}>
            <svg width="60" height="64" viewBox="0 0 60 64">
              <path d="M3 15H58M3 36H58M3 57H58" stroke="#222" strokeWidth="5" strokeLinecap="round" />
            </svg>
            更多
          </Action>
          <Split />
        </Actions>
        <NavBar>
          <svg width="310" height="38" viewBox="0 0 310 38">
            <g fill="none" stroke="#9b9b9b" strokeWidth="2.500">
              <path d="M1 2.500H37M1 19H37M1 35.500H37" />
              <rect x="270" y="1.500" width="34" height="34" rx="8" />
            </g>
          </svg>
          <svg width="290" height="38" viewBox="0 0 290 38">
            <path d="M227 18.500 256 2.500Q259 1 259 4.500V32.500Q259 36 256 34.500z" fill="none" stroke="#9b9b9b" strokeWidth="2.500" strokeLinejoin="round" />
          </svg>
        </NavBar>
      </Screen>
    </>
  );
}
